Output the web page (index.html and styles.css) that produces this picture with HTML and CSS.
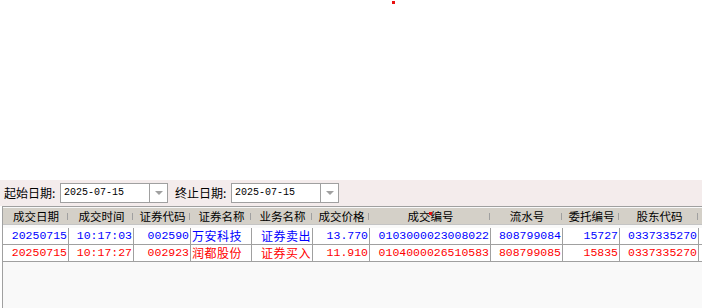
FILE: index.html
```html
<!DOCTYPE html>
<html lang="zh-CN">
<head>
    <meta charset="UTF-8">
    <title>成交查询</title>
    <link rel="stylesheet" href="styles.css">
</head>
<body>
    <div class="blank"></div>

    <div class="toolbar">
        <span class="label">起始日期:</span>
        <div class="datebox">
            <span class="datetext">2025-07-15</span>
            <span class="dropbtn"><span class="arrow"></span></span>
        </div>
        <span class="label label-end">终止日期:</span>
        <div class="datebox">
            <span class="datetext">2025-07-15</span>
            <span class="dropbtn"><span class="arrow"></span></span>
        </div>
    </div>

    <div class="grid">
        <div class="head">
            <div class="hc">成交日期</div>
            <div class="hc">成交时间</div>
            <div class="hc">证券代码</div>
            <div class="hc">证券名称</div>
            <div class="hc">业务名称</div>
            <div class="hc">成交价格</div>
            <div class="hc">成交编号</div>
            <div class="hc">流水号</div>
            <div class="hc">委托编号</div>
            <div class="hc">股东代码</div>
            <div class="hc filler"></div>
        </div>

        <div class="row sell">
            <div class="c">20250715</div>
            <div class="c">10:17:03</div>
            <div class="c">002590</div>
            <div class="c cn left">万安科技</div>
            <div class="c cn">证券卖出</div>
            <div class="c">13.770</div>
            <div class="c">0103000023008022</div>
            <div class="c">808799084</div>
            <div class="c">15727</div>
            <div class="c">0337335270</div>
            <div class="c filler"></div>
        </div>
        <div class="row buy">
            <div class="c">20250715</div>
            <div class="c">10:17:27</div>
            <div class="c">002923</div>
            <div class="c cn left">润都股份</div>
            <div class="c cn">证券买入</div>
            <div class="c">11.910</div>
            <div class="c">0104000026510583</div>
            <div class="c">808799085</div>
            <div class="c">15835</div>
            <div class="c">0337335270</div>
            <div class="c filler"></div>
        </div>
    </div>

    <!-- stray red pixels seen on the capture -->
    <div class="dot dot-top"></div>
    <div class="dot dot-head"></div>
</body>
</html>
```

FILE: styles.css
```css
html, body {
    margin: 0;
    padding: 0;
    height: 100%;
}

body {
    display: flex;
    flex-direction: column;
    background: #ffffff;
    font-family: "Noto Sans CJK SC", sans-serif;
    color: #000000;
    overflow: hidden;
}

.blank {
    height: 180px;
    flex: none;
}

.toolbar {
    height: 26px;
    flex: none;
    display: flex;
    align-items: center;
    padding-left: 4px;
    background: #f4ecec;
}

.label {
    width: 56px;
    font-size: 12px;
    line-height: 16px;
    white-space: nowrap;
}

.label-end {
    margin-left: 7px;
}

.datebox {
    width: 108px;
    height: 20px;
    box-sizing: border-box;
    display: flex;
    border: 1px solid #a0a0a0;
    background: #ffffff;
}

.datetext {
    flex: 1;
    padding-left: 3px;
    font-family: "Liberation Mono", monospace;
    font-size: 10px;
    line-height: 18px;
}

.dropbtn {
    width: 17px;
    border-left: 1px solid #a0a0a0;
    display: flex;
    align-items: center;
    justify-content: center;
}

.arrow {
    width: 0;
    height: 0;
    border-left: 4px solid transparent;
    border-right: 4px solid transparent;
    border-top: 4px solid #a0a0a0;
}

.grid {
    flex: 1;
    margin-left: 2px;
    border-left: 1px solid #a0a0a0;
    border-top: 1px solid #a0a0a0;
    background: #f9f9f9;
}

.head, .row {
    display: grid;
    grid-template-columns: 66px 65px 57px 61px 61px 57px 121px 72px 57px 79px 1fr;
}

.head {
    margin-top: 1px;
    height: 16px;
    background: #d4d0c8;
    border-bottom: 1px solid #c4c4c4;
}

.hc {
    position: relative;
    text-align: center;
    font-size: 11.5px;
    line-height: 16px;
    white-space: nowrap;
}

.hc::after {
    content: "";
    position: absolute;
    right: 1px;
    top: 5px;
    height: 7px;
    border-left: 1px solid #a0a0a0;
}

.hc.filler::after {
    display: none;
}

.row {
    height: 17px;
    box-sizing: border-box;
    background: #ffffff;
    border-bottom: 1px solid #a0a0a0;
}

.sell {
    margin-top: 3px;
    color: #0000ff;
}

.buy {
    color: #ff0000;
}

.c {
    box-sizing: border-box;
    border-right: 1px solid #a0a0a0;
    padding-right: 1px;
    text-align: right;
    font-family: "Liberation Mono", "Noto Sans CJK SC", monospace;
    font-size: 11.5px;
    line-height: 16px;
    white-space: nowrap;
    overflow: hidden;
}

.c.cn {
    font-family: "Noto Sans CJK SC", sans-serif;
    font-size: 12px;
    letter-spacing: 0.5px;
    overflow: visible;
}

.c.left {
    text-align: left;
    padding-left: 1px;
}

.c.filler {
    border-right: none;
}

.dot {
    position: absolute;
    width: 3px;
    height: 3px;
    background: #e81010;
}

.dot-top {
    left: 392px;
    top: 1px;
}

.dot-head {
    left: 429px;
    top: 212px;
}
```
